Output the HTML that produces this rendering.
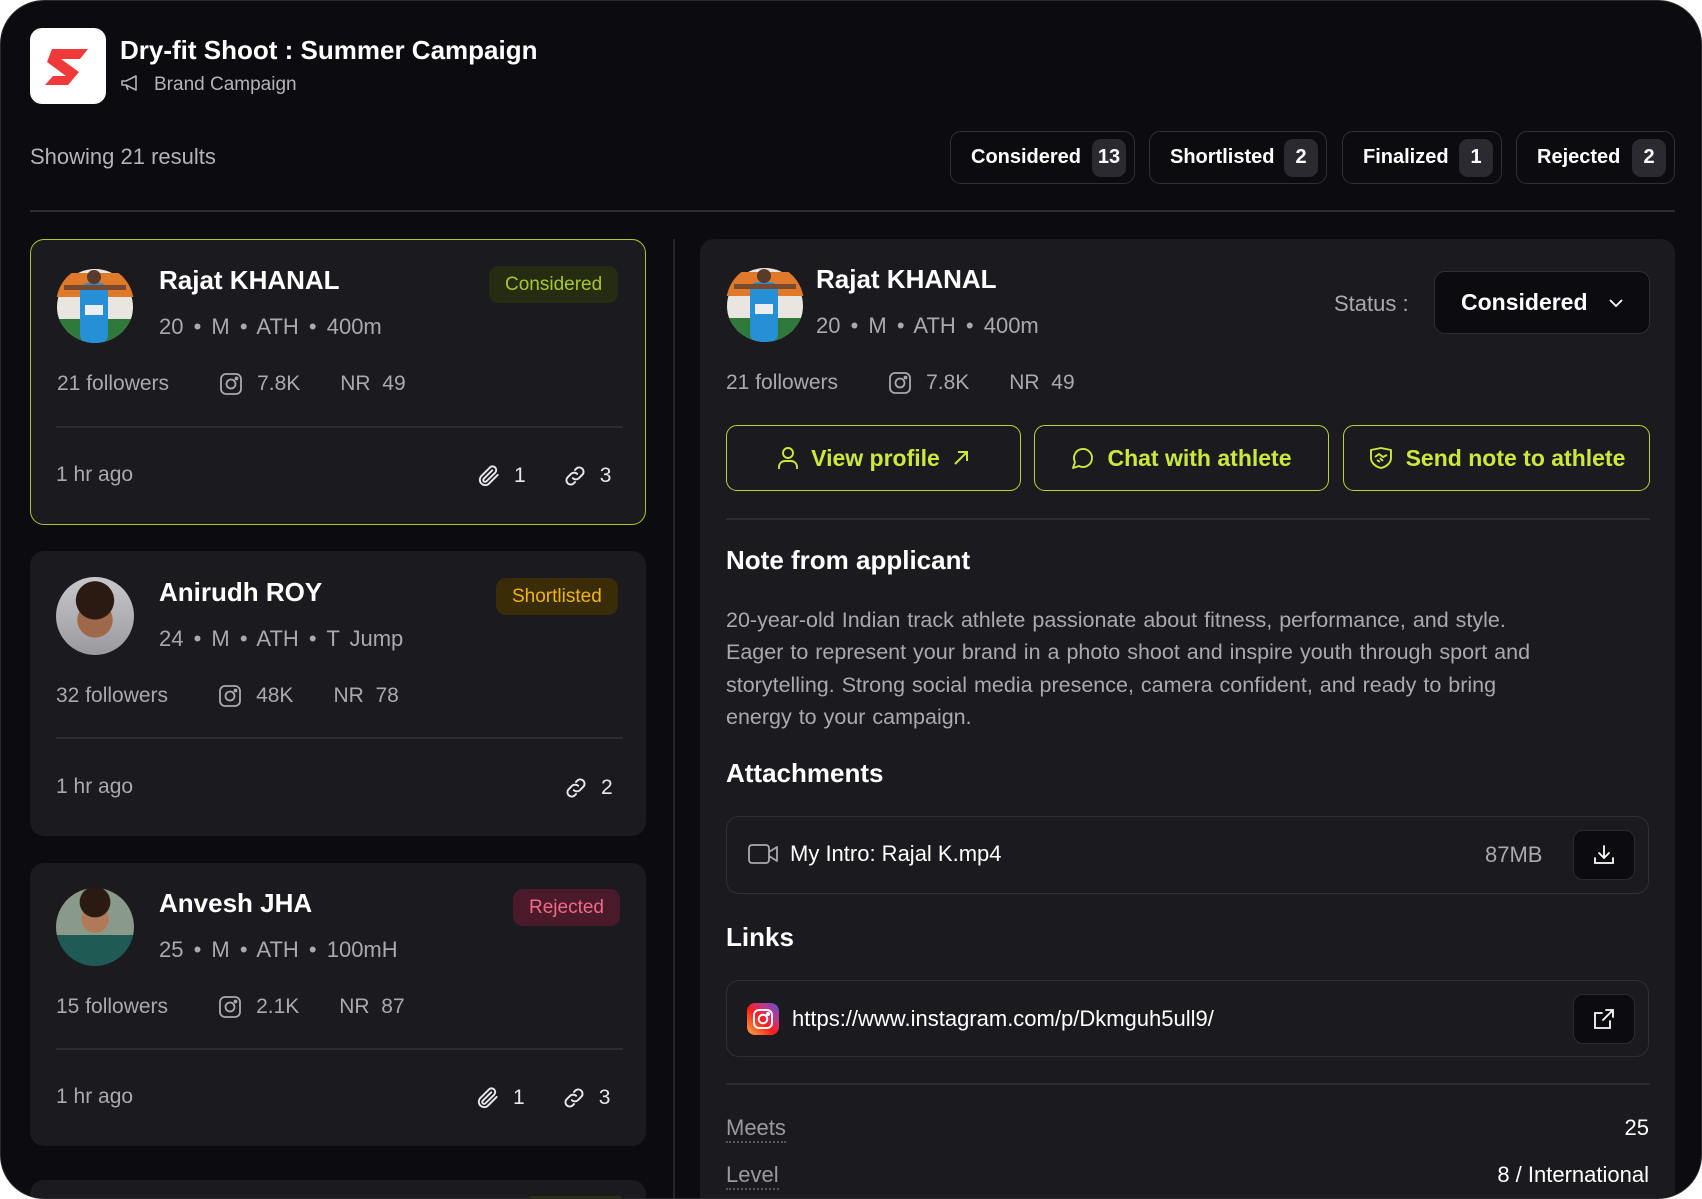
<!DOCTYPE html>
<html><head><meta charset="utf-8">
<style>
*{box-sizing:border-box;margin:0;padding:0}
html,body{width:1702px;height:1199px;background:#fff;overflow:hidden}
body{font-family:"Liberation Sans",sans-serif;color:#fff}
.frame{position:absolute;left:0;top:0;width:1702px;height:1199px;background:#0c0b0f;border-radius:44px;overflow:hidden;border:1px solid #2a2a2e}
.abs{position:absolute}
.logo{left:29px;top:27px;width:76px;height:76px;background:#fff;border-radius:12px}
.title{left:119px;top:34px;font-size:26px;font-weight:bold}
.sub{left:119px;top:73px;font-size:19px;color:#b4b4b8}
.showing{left:29px;top:143px;font-size:22px;color:#b4b4b8}
.pill{top:130px;height:53px;border:1.5px solid #2f2f35;border-radius:11px;display:flex;align-items:center;justify-content:space-between;padding:0 8px 0 20px;font-size:20px;font-weight:bold;background:#0c0b0f}
.pill span{background:#2a2a30;border-radius:9px;min-width:34px;height:38px;display:flex;align-items:center;justify-content:center;font-weight:bold}
.hr{height:2px;background:#2c2c31}
.card{left:29px;width:616px;background:#1b1a1f;border-radius:14px}
.card.sel{border:1.5px solid #a6c82a}
.av{border-radius:50%;overflow:hidden}
.name{font-size:26px;font-weight:bold}
.meta{font-size:22px;color:#a9a9ae;word-spacing:4px}
.stat{font-size:21px;color:#a9a9ae;display:flex;align-items:center;white-space:nowrap}
.badge{height:37px;border-radius:10px;font-size:19px;display:flex;align-items:center;padding:0 16px}
.foot{font-size:21px;color:#a9a9ae}
.ic{display:inline-block;vertical-align:middle}
.panel{left:699px;top:238px;width:975px;height:961px;background:#1b1a1f;border-radius:14px 14px 0 0}
.btn{top:424px;height:66px;border:1.5px solid #b4d630;border-radius:11px;display:flex;align-items:center;justify-content:center;gap:12px;color:#cbe93a;font-size:23px;font-weight:bold}
.h{font-size:26px;font-weight:bold}
.box{left:725px;width:923px;border:1.5px solid #2f2f35;border-radius:13px}
.sq{width:62px;height:50px;background:#0c0b0f;border:1.5px solid #2a2a30;border-radius:10px;display:flex;align-items:center;justify-content:center}
.dl{border-bottom:2px dotted #55555a;color:#9a9a9f;word-spacing:0}
</style></head><body>
<div class="frame">
<svg width="0" height="0" style="position:absolute"><defs>
<clipPath id="cc"><circle cx="39" cy="39" r="39"/></clipPath>
<g id="flag"><rect width="78" height="78" fill="#1b1a1f"/><circle cx="39" cy="42" r="38" fill="#e9e6e1"/><path d="M0 8 H78 V32 H0Z" fill="#e07a2a"/><path d="M0 54 H78 V80 H0Z" fill="#2f7a3a"/><rect x="24" y="18" width="28" height="60" rx="8" fill="#2590d6"/><circle cx="38" cy="12" r="7" fill="#5a3a28"/><rect x="8" y="20" width="62" height="5" fill="#7a4a30"/><rect x="29" y="40" width="18" height="10" fill="#eee"/></g>
</defs></svg>
<div class="abs logo"><svg width="76" height="76" viewBox="0 0 76 76"><path d="M22 21 L58 21 L50 31 L31 31 L49 44 L38 57 L15 57 L23 48 L36 48 L17 34 Z" fill="#f03a3a"/></svg></div>
<div class="abs title">Dry-fit Shoot : Summer Campaign</div>
<div class="abs sub"><svg class="ic" width="22" height="18" viewBox="0 0 22 18" style="margin-right:12px;margin-top:-3px"><path d="M2 7 L2 11 L6 11 L16 16 L16 2 L6 7 Z M6 11 L8 16" fill="none" stroke="#b4b4b8" stroke-width="1.6" stroke-linejoin="round"/></svg>Brand Campaign</div>
<div class="abs showing">Showing 21 results</div>
<div class="abs pill" style="left:949px;width:185px">Considered<span>13</span></div>
<div class="abs pill" style="left:1148px;width:178px">Shortlisted<span>2</span></div>
<div class="abs pill" style="left:1341px;width:160px">Finalized<span>1</span></div>
<div class="abs pill" style="left:1515px;width:159px">Rejected<span>2</span></div>
<div class="abs hr" style="left:29px;top:209px;width:1645px"></div>
<div class="abs" style="left:672px;top:238px;width:2px;height:961px;background:#242429"></div>

<div class="abs card sel" style="top:238px;height:286px"></div>
<div class="abs card" style="top:550px;height:285px"></div>
<div class="abs card" style="top:862px;height:283px"></div>
<div class="abs card" style="top:1179px;height:20px;border-radius:14px 14px 0 0"></div>
<div class="abs" style="left:527px;top:1195px;width:95px;height:4px;background:#2a3014;border-radius:6px 6px 0 0"></div>

<div class="abs av" style="left:55px;top:264px;width:78px;height:78px"><svg width="78" height="78"><g clip-path="url(#cc)"><use href="#flag"/></g></svg></div>
<div class="abs name" style="left:158px;top:264px">Rajat KHANAL</div>
<div class="abs meta" style="left:158px;top:313px">20 • M • ATH • 400m</div>
<div class="abs badge" style="left:488px;top:265px;background:#262c12;color:#a5c82a">Considered</div>
<div class="abs stat" style="left:56px;top:371px">21 followers<span style="width:50px"></span><svg width="24" height="24" viewBox="0 0 24 24" fill="none" stroke="#a9a9ae" stroke-width="1.8"><rect x="2" y="2" width="20" height="20" rx="5"/><circle cx="12" cy="12" r="4.5"/><circle cx="17.5" cy="6.5" r="1" fill="#a9a9ae"/></svg><span style="width:14px"></span>7.8K<span style="width:40px"></span>NR&nbsp;&nbsp;49</div>
<div class="abs hr" style="left:55px;top:425px;width:567px"></div>
<div class="abs foot" style="left:55px;top:462px">1 hr ago</div>
<div class="abs foot" style="left:475px;top:462px;display:flex;align-items:center;color:#e8e8ea"><svg width="26" height="26" viewBox="0 0 24 24" fill="none" stroke="#e8e8ea" stroke-width="1.8" stroke-linecap="round"><path d="M20 11 L11.5 19.5 a5 5 0 0 1 -7 -7 L13 4 a3.4 3.4 0 0 1 4.8 4.8 L9.5 17 a1.7 1.7 0 0 1 -2.4 -2.4 L15 6.7"/></svg><span style="margin-left:12px">1</span><span style="width:36px"></span><svg width="26" height="26" viewBox="0 0 24 24" fill="none" stroke="#e8e8ea" stroke-width="1.8" stroke-linecap="round"><path d="M10 14 a4 4 0 0 0 5.6 0 l3.5-3.5 a4 4 0 0 0 -5.6 -5.6 l-1.5 1.5"/><path d="M14 10 a4 4 0 0 0 -5.6 0 l-3.5 3.5 a4 4 0 0 0 5.6 5.6 l1.5 -1.5"/></svg><span style="margin-left:12px">3</span></div>

<div class="abs av" style="left:55px;top:576px;width:78px;height:78px;background:radial-gradient(circle at 50% 30%,#2a1a12 0 28%,transparent 29%),radial-gradient(circle at 50% 55%,#a0684a 0 30%,transparent 31%),linear-gradient(#c8c8cc,#9a9a9e)"></div>
<div class="abs name" style="left:158px;top:576px">Anirudh ROY</div>
<div class="abs meta" style="left:158px;top:625px">24 • M • ATH • T Jump</div>
<div class="abs badge" style="left:495px;top:577px;background:#3a2c06;color:#f0b416">Shortlisted</div>
<div class="abs stat" style="left:55px;top:683px">32 followers<span style="width:50px"></span><svg width="24" height="24" viewBox="0 0 24 24" fill="none" stroke="#a9a9ae" stroke-width="1.8"><rect x="2" y="2" width="20" height="20" rx="5"/><circle cx="12" cy="12" r="4.5"/><circle cx="17.5" cy="6.5" r="1" fill="#a9a9ae"/></svg><span style="width:14px"></span>48K<span style="width:40px"></span>NR&nbsp;&nbsp;78</div>
<div class="abs hr" style="left:55px;top:736px;width:567px"></div>
<div class="abs foot" style="left:55px;top:774px">1 hr ago</div>
<div class="abs foot" style="left:562px;top:774px;display:flex;align-items:center;color:#e8e8ea"><svg width="26" height="26" viewBox="0 0 24 24" fill="none" stroke="#e8e8ea" stroke-width="1.8" stroke-linecap="round"><path d="M10 14 a4 4 0 0 0 5.6 0 l3.5-3.5 a4 4 0 0 0 -5.6 -5.6 l-1.5 1.5"/><path d="M14 10 a4 4 0 0 0 -5.6 0 l-3.5 3.5 a4 4 0 0 0 5.6 5.6 l1.5 -1.5"/></svg><span style="margin-left:12px">2</span></div>

<div class="abs av" style="left:55px;top:887px;width:78px;height:78px;background:radial-gradient(circle at 50% 18%,#2a1a12 0 20%,transparent 21%),radial-gradient(circle at 50% 40%,#b07a58 0 22%,transparent 23%),linear-gradient(#8a9a8a 0 60%,#1f5a55 60%)"></div>
<div class="abs name" style="left:158px;top:887px">Anvesh JHA</div>
<div class="abs meta" style="left:158px;top:936px">25 • M • ATH • 100mH</div>
<div class="abs badge" style="left:512px;top:888px;background:#4a1a2a;color:#f06a8a">Rejected</div>
<div class="abs stat" style="left:55px;top:994px">15 followers<span style="width:50px"></span><svg width="24" height="24" viewBox="0 0 24 24" fill="none" stroke="#a9a9ae" stroke-width="1.8"><rect x="2" y="2" width="20" height="20" rx="5"/><circle cx="12" cy="12" r="4.5"/><circle cx="17.5" cy="6.5" r="1" fill="#a9a9ae"/></svg><span style="width:14px"></span>2.1K<span style="width:40px"></span>NR&nbsp;&nbsp;87</div>
<div class="abs hr" style="left:55px;top:1047px;width:567px"></div>
<div class="abs foot" style="left:55px;top:1084px">1 hr ago</div>
<div class="abs foot" style="left:474px;top:1084px;display:flex;align-items:center;color:#e8e8ea"><svg width="26" height="26" viewBox="0 0 24 24" fill="none" stroke="#e8e8ea" stroke-width="1.8" stroke-linecap="round"><path d="M20 11 L11.5 19.5 a5 5 0 0 1 -7 -7 L13 4 a3.4 3.4 0 0 1 4.8 4.8 L9.5 17 a1.7 1.7 0 0 1 -2.4 -2.4 L15 6.7"/></svg><span style="margin-left:12px">1</span><span style="width:36px"></span><svg width="26" height="26" viewBox="0 0 24 24" fill="none" stroke="#e8e8ea" stroke-width="1.8" stroke-linecap="round"><path d="M10 14 a4 4 0 0 0 5.6 0 l3.5-3.5 a4 4 0 0 0 -5.6 -5.6 l-1.5 1.5"/><path d="M14 10 a4 4 0 0 0 -5.6 0 l-3.5 3.5 a4 4 0 0 0 5.6 5.6 l1.5 -1.5"/></svg><span style="margin-left:12px">3</span></div>

<div class="abs panel"></div>
<div class="abs av" style="left:725px;top:263px;width:78px;height:78px"><svg width="78" height="78"><g clip-path="url(#cc)"><use href="#flag"/></g></svg></div>
<div class="abs name" style="left:815px;top:263px">Rajat KHANAL</div>
<div class="abs meta" style="left:815px;top:312px">20 • M • ATH • 400m</div>
<div class="abs meta" style="left:1333px;top:290px;word-spacing:0">Status :</div>
<div class="abs" style="left:1433px;top:270px;width:216px;height:63px;background:#0c0b0f;border:1.5px solid #2f2f35;border-radius:11px;display:flex;align-items:center;padding-left:26px;font-size:23px;font-weight:bold">Considered<svg style="margin-left:20px" width="16" height="10" viewBox="0 0 16 10" fill="none" stroke="#fff" stroke-width="1.8"><path d="M2 2 L8 8 L14 2"/></svg></div>
<div class="abs stat" style="left:725px;top:370px">21 followers<span style="width:50px"></span><svg width="24" height="24" viewBox="0 0 24 24" fill="none" stroke="#a9a9ae" stroke-width="1.8"><rect x="2" y="2" width="20" height="20" rx="5"/><circle cx="12" cy="12" r="4.5"/><circle cx="17.5" cy="6.5" r="1" fill="#a9a9ae"/></svg><span style="width:14px"></span>7.8K<span style="width:40px"></span>NR&nbsp;&nbsp;49</div>

<div class="abs btn" style="left:725px;width:295px"><svg width="22" height="24" viewBox="0 0 22 24" fill="none" stroke="#cbe93a" stroke-width="1.9"><circle cx="11" cy="7" r="5"/><path d="M2 23 v-2 a6 6 0 0 1 6 -6 h6 a6 6 0 0 1 6 6 v2"/></svg>View profile<svg width="18" height="18" viewBox="0 0 18 18" fill="none" stroke="#cbe93a" stroke-width="2"><path d="M3 15 L15 3 M6 3 H15 V12"/></svg></div>
<div class="abs btn" style="left:1033px;width:295px"><svg width="24" height="24" viewBox="0 0 24 24" fill="none" stroke="#cbe93a" stroke-width="1.9" stroke-linejoin="round"><path d="M7.9 20A9 9 0 1 0 4 16.1L2 22Z"/></svg>Chat with athlete</div>
<div class="abs btn" style="left:1342px;width:307px"><svg width="26" height="24" viewBox="0 0 26 24" fill="none" stroke="#cbe93a" stroke-width="1.9" stroke-linejoin="round"><path d="M3 4 L13 2 L23 4 V12 C23 17 18 21 13 22 C8 21 3 17 3 12 Z"/><path d="M7 11 L11 8 L15 11 L19 9 M9 14 L12 16 M12 12 L15 15"/></svg>Send note to athlete</div>
<div class="abs hr" style="left:725px;top:517px;width:924px"></div>
<div class="abs h" style="left:725px;top:544px">Note from applicant</div>
<div class="abs" style="left:725px;top:603px;font-size:21.5px;line-height:32.3px;color:#a9a9ae;white-space:nowrap;word-spacing:1px">20-year-old Indian track athlete passionate about fitness, performance, and style.<br>Eager to represent your brand in a photo shoot and inspire youth through sport and<br>storytelling. Strong social media presence, camera confident, and ready to bring<br>energy to your campaign.</div>
<div class="abs h" style="left:725px;top:757px">Attachments</div>
<div class="abs box" style="top:815px;height:78px"></div>
<div class="abs" style="left:747px;top:840px;display:flex;align-items:center;font-size:22px"><svg width="30" height="22" viewBox="0 0 30 22" fill="none" stroke="#a9a9ae" stroke-width="1.8" stroke-linejoin="round"><rect x="1" y="2" width="20" height="18" rx="3"/><path d="M21 9 L29 4 V18 L21 13"/></svg><span style="margin-left:12px">My Intro: Rajal K.mp4</span></div>
<div class="abs meta" style="left:1484px;top:841px">87MB</div>
<div class="abs sq" style="left:1572px;top:829px"><svg width="22" height="22" viewBox="0 0 22 22" fill="none" stroke="#fff" stroke-width="1.8" stroke-linecap="round"><path d="M11 2 V14 M6 9 L11 14 L16 9 M2 14 V19 H20 V14"/></svg></div>
<div class="abs h" style="left:725px;top:921px">Links</div>
<div class="abs box" style="top:979px;height:77px"></div>
<div class="abs" style="left:746px;top:1002px;width:32px;height:32px;border-radius:8px;background:linear-gradient(45deg,#fcb045,#fd1d1d 45%,#c13584 70%,#5851db)"><svg width="32" height="32" viewBox="0 0 32 32" fill="none" stroke="#fff" stroke-width="2"><rect x="7" y="7" width="18" height="18" rx="5"/><circle cx="16" cy="16" r="4.3"/><circle cx="21" cy="11" r="1" fill="#fff"/></svg></div>
<div class="abs" style="left:791px;top:1005px;font-size:22px">https://www.instagram.com/p/Dkmguh5ull9/</div>
<div class="abs sq" style="left:1572px;top:993px"><svg width="22" height="22" viewBox="0 0 22 22" fill="none" stroke="#fff" stroke-width="1.8" stroke-linecap="round"><path d="M13 2 H20 V9 M20 2 L10 12 M17 13 V20 H2 V5 H9"/></svg></div>
<div class="abs hr" style="left:725px;top:1082px;width:924px"></div>
<div class="abs meta dl" style="left:725px;top:1114px">Meets</div>
<div class="abs" style="left:1500px;top:1114px;width:148px;text-align:right;font-size:22px">25</div>
<div class="abs meta dl" style="left:725px;top:1161px">Level</div>
<div class="abs" style="left:1400px;top:1161px;width:248px;text-align:right;font-size:22px">8 / International</div>
</div>
</body></html>
